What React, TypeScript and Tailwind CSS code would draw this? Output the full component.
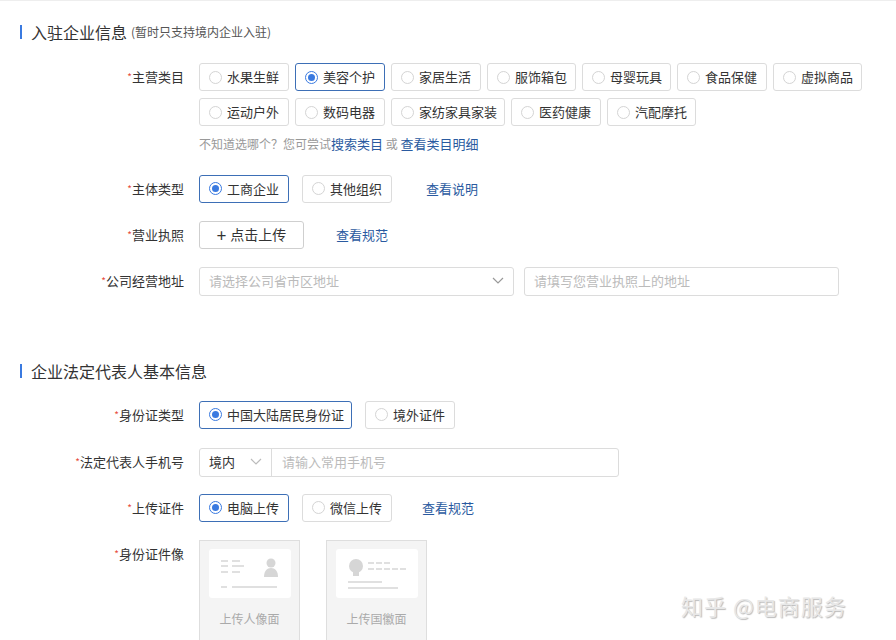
import React from "react";

const F = { fontFamily: '"Noto Sans CJK SC", "Noto Sans", sans-serif' };

function Radio({ on }: { on?: boolean }) {
  return on ? (
    <span className="w-[13px] h-[13px] rounded-full border border-[#3a7ae0] flex items-center justify-center mr-[5px]">
      <span className="w-[7px] h-[7px] rounded-full bg-[#3a7ae0]" />
    </span>
  ) : (
    <span className="w-[13px] h-[13px] rounded-full border border-[#d4d4d4] mr-[5px]" />
  );
}

function Opt({ t, on, w }: { t: string; on?: boolean; w: string }) {
  return (
    <div className={`${w} h-[28px] flex items-center pl-[9px] rounded-[3px] border ${on ? "border-[#3d6fb6]" : "border-[#dcdcdc]"} text-[13px] text-[#333]`}>
      <Radio on={on} />
      {t}
    </div>
  );
}

function Row({ label, children, cls = "" }: { label: string; children: React.ReactNode; cls?: string }) {
  return (
    <div className={`flex ${cls}`}>
      <div className="w-[184px] shrink-0 text-right text-[13px] text-[#333] leading-[28px]">
        <span className="text-[#e74c3c] text-[10px] align-top">*</span>
        {label}
      </div>
      <div className="ml-[15px]">{children}</div>
    </div>
  );
}

function Title({ t, sub }: { t: string; sub?: string }) {
  return (
    <div className="flex items-center pl-[20px]">
      <span className="w-[2px] h-[14px] bg-[#3a7ae0]" />
      <span className="ml-[9px] text-[16px] text-[#333]">{t}</span>
      {sub && <span className="ml-[4px] text-[12px] text-[#555]">{sub}</span>}
    </div>
  );
}

const Link = ({ t, cls = "" }: { t: string; cls?: string }) => (
  <span className={`text-[13px] text-[#2a5aa0] ${cls}`}>{t}</span>
);

export default function App() {
  return (
    <div style={F} className="w-[896px] h-[640px] bg-white relative overflow-hidden border-t border-[#eeeeee]">
      <div className="pt-[19px]">
        <Title t="入驻企业信息" sub="(暂时只支持境内企业入驻)" />
        <Row label="主营类目" cls="mt-[19px]">
          <div className="flex gap-[6px]">
            <Opt t="水果生鲜" w="w-[90px]" />
            <Opt t="美容个护" on w="w-[90px]" />
            <Opt t="家居生活" w="w-[90px]" />
            <Opt t="服饰箱包" w="w-[89px]" />
            <Opt t="母婴玩具" w="w-[89px]" />
            <Opt t="食品保健" w="w-[90px]" />
            <Opt t="虚拟商品" w="w-[89px]" />
          </div>
          <div className="flex gap-[6px] mt-[7px]">
            <Opt t="运动户外" w="w-[90px]" />
            <Opt t="数码电器" w="w-[90px]" />
            <Opt t="家纺家具家装" w="w-[114px]" />
            <Opt t="医药健康" w="w-[90px]" />
            <Opt t="汽配摩托" w="w-[89px]" />
          </div>
          <div className="mt-[8px] text-[12px] text-[#999]">
            不知道选哪个？您可尝试<Link t="搜索类目" cls="text-[12px]" /> 或 <Link t="查看类目明细" cls="text-[12px]" />
          </div>
        </Row>
        <Row label="主体类型" cls="mt-[21px]">
          <div className="flex items-center gap-[13px]">
            <Opt t="工商企业" on w="w-[90px]" />
            <Opt t="其他组织" w="w-[90px]" />
            <Link t="查看说明" cls="ml-[21px]" />
          </div>
        </Row>
        <Row label="营业执照" cls="mt-[18px]">
          <div className="flex items-center">
            <div className="w-[105px] h-[28px] border border-[#cfcfcf] rounded-[3px] flex items-center justify-center text-[14px] text-[#333]">
              <span className="text-[17px] mr-[4px] leading-none">+</span>点击上传
            </div>
            <Link t="查看规范" cls="ml-[32px]" />
          </div>
        </Row>
        <Row label="公司经营地址" cls="mt-[18px]">
          <div className="flex gap-[10px]">
            <div className="w-[315px] h-[29px] border border-[#dcdcdc] rounded-[3px] flex items-center justify-between px-[9px] text-[13px] text-[#bbb]">
              请选择公司省市区地址
              <svg width="12" height="8" viewBox="0 0 12 8"><path d="M1 1l5 5 5-5" fill="none" stroke="#999" strokeWidth="1.2" /></svg>
            </div>
            <div className="w-[315px] h-[29px] border border-[#dcdcdc] rounded-[3px] flex items-center px-[9px] text-[13px] text-[#bbb]">
              请填写您营业执照上的地址
            </div>
          </div>
        </Row>
        <div className="mt-[63px]"><Title t="企业法定代表人基本信息" /></div>
        <Row label="身份证类型" cls="mt-[18px]">
          <div className="flex gap-[13px]">
            <Opt t="中国大陆居民身份证" on w="w-[153px]" />
            <Opt t="境外证件" w="w-[90px]" />
          </div>
        </Row>
        <Row label="法定代表人手机号" cls="mt-[19px]">
          <div className="w-[420px] h-[29px] border border-[#dcdcdc] rounded-[3px] flex items-center text-[13px]">
            <div className="w-[72px] h-full flex items-center justify-between px-[9px] border-r border-[#dcdcdc] text-[#333]">
              境内
              <svg width="12" height="8" viewBox="0 0 12 8"><path d="M1 1l5 5 5-5" fill="none" stroke="#bbb" strokeWidth="1.2" /></svg>
            </div>
            <span className="ml-[10px] text-[#bbb]">请输入常用手机号</span>
          </div>
        </Row>
        <Row label="上传证件" cls="mt-[17px]">
          <div className="flex items-center gap-[13px]">
            <Opt t="电脑上传" on w="w-[90px]" />
            <Opt t="微信上传" w="w-[90px]" />
            <Link t="查看规范" cls="ml-[17px]" />
          </div>
        </Row>
        <Row label="身份证件像" cls="mt-[18px]">
          <div className="flex gap-[26px]">
            {["上传人像面", "上传国徽面"].map((t, i) => (
              <div key={t} className="w-[101px] h-[101px] border border-[#dedede] bg-[#f4f4f4] flex flex-col items-center pt-[8px]">
                <div className="w-[82px] h-[49px] bg-white rounded-[3px]">
                  {i === 0 ? (
                    <svg width="82" height="49" viewBox="0 0 82 49">
                      <g stroke="#d6d6d6" strokeWidth="1.5">
                        <path d="M12 12h7M23 12h8M12 17h7M23 17h12M12 23h7M23 23h8M12 38h6M23 38h45" />
                      </g>
                      <circle cx="62" cy="14" r="4.5" fill="#d6d6d6" />
                      <path d="M55 28c0-6 3-9 7-9s7 3 7 9z" fill="#d6d6d6" />
                    </svg>
                  ) : (
                    <svg width="82" height="49" viewBox="0 0 82 49">
                      <circle cx="20" cy="17" r="7" fill="#d6d6d6" />
                      <path d="M17 23h6v4h-6z" fill="#d6d6d6" />
                      <g stroke="#d6d6d6" strokeWidth="1.5">
                        <path d="M32 14h24M32 20h40" strokeDasharray="6 2" />
                        <path d="M12 33h34M12 39h50" />
                      </g>
                    </svg>
                  )}
                </div>
                <div className="mt-[12px] text-[12px] text-[#aaa]">{t}</div>
              </div>
            ))}
          </div>
        </Row>
      </div>
      <div className="absolute left-[681px] top-[588px] text-[22px] text-[#e8e8e8] tracking-[1px]" style={{ textShadow: "1px 1px 1px #bbb" }}>
        知乎 @电商服务
      </div>
    </div>
  );
}
